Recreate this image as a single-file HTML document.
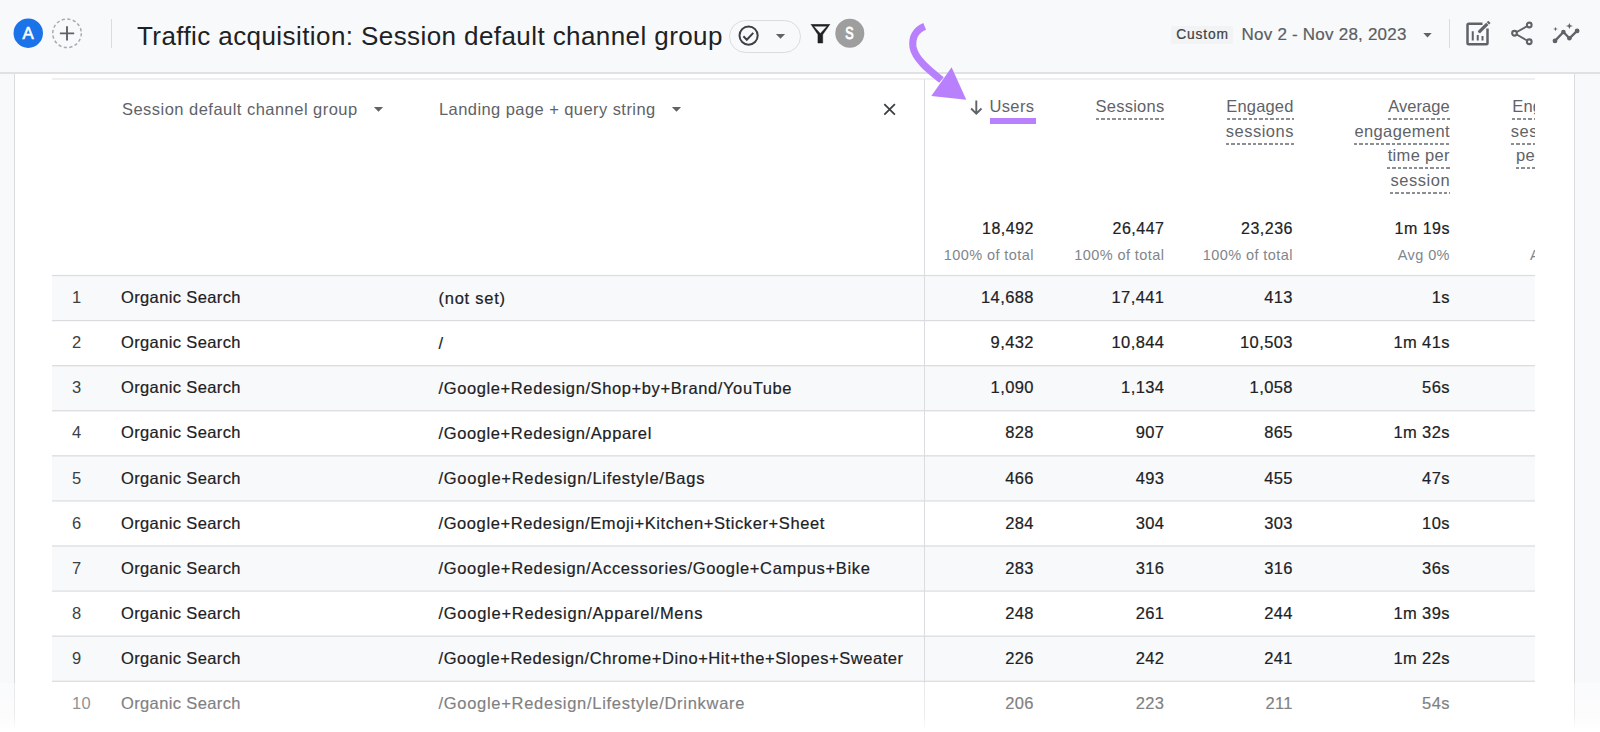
<!DOCTYPE html>
<html><head><meta charset="utf-8"><style>
html,body{margin:0;padding:0}
body{width:1600px;height:732px;overflow:hidden;position:relative;background:#f8f9fa;font-family:"Liberation Sans",sans-serif}
.t{position:absolute;white-space:nowrap}
.hdr{position:absolute;left:0;top:0;width:1600px;height:73px;background:#f8f9fa}
.card{position:absolute;left:14px;top:74px;width:1559px;height:700px;background:#fff;border-left:1px solid #dadce0;border-right:1px solid #dadce0}
</style></head><body>
<div class="hdr"></div>
<svg style="position:absolute;left:0;top:0" width="60" height="60"><circle cx="28.25" cy="33.2" r="14.7" fill="#1a73e8"/></svg>
<div class="t" style="left:13.3px;top:25.6px;width:29.6px;text-align:center;font-size:16.8px;line-height:16px;color:#fff;-webkit-text-stroke:0.6px #fff">A</div>
<svg style="position:absolute;left:51px;top:17px" width="32" height="32" viewBox="0 0 32 32"><circle cx="16" cy="16.3" r="14.3" fill="none" stroke="#a8acb0" stroke-width="1.5" stroke-dasharray="3.2 2.4"/><path d="M16 9.2v14.3M8.9 16.4h14.3" stroke="#5f6368" stroke-width="1.9"/></svg>
<div style="position:absolute;left:111px;top:19px;width:1px;height:29px;background:#dadce0"></div>
<div class="t" style="left:137px;top:22.79px;font-size:26px;line-height:26px;color:#202124;font-weight:400;letter-spacing:0.415px;">Traffic acquisition: Session default channel group</div>
<div style="position:absolute;left:729px;top:19.5px;width:71.5px;height:33px;border:1.2px solid #dadce0;border-radius:17px;box-sizing:border-box"></div>
<svg style="position:absolute;left:738px;top:25px" width="22" height="22" viewBox="0 0 22 22"><circle cx="10.6" cy="10.6" r="9.1" fill="none" stroke="#3c4043" stroke-width="2"/><path d="M5.4 11.3l3.4 3.4 6.5-6.8" fill="none" stroke="#3c4043" stroke-width="2"/></svg>
<svg style="position:absolute;left:775px;top:33px" width="11" height="7" viewBox="0 0 11 7"><path d="M0.9 0.9h9.2l-4.6 4.9z" fill="#5f6368"/></svg>
<svg style="position:absolute;left:810px;top:23.5px" width="22" height="21" viewBox="0 0 22 21"><path d="M0.9 0.2H20L12.75 10.6V19.1H7.9V10.6Z M3.7 2.2H17L10.3 9.5Z" fill="#202124" fill-rule="evenodd" stroke="#202124" stroke-width="0.4" stroke-linejoin="round"/></svg>
<svg style="position:absolute;left:800px;top:0" width="80" height="60"><circle cx="49.8" cy="33.3" r="14.5" fill="#9e9e9e"/></svg>
<div class="t" style="left:835px;top:26.1px;width:29px;text-align:center;font-size:16px;line-height:16px;color:#fff;-webkit-text-stroke:0.9px #fff;transform:scaleX(0.78)">S</div>
<div style="position:absolute;left:1171px;top:25.5px;width:61.5px;height:18px;background:#f1f3f4;border-radius:2px"></div>
<div class="t" style="left:1176.2px;top:28.32px;font-size:13.8px;line-height:13.8px;color:#3c4043;font-weight:400;letter-spacing:0.832px;-webkit-text-stroke:0.2px currentColor;">Custom</div>
<div class="t" style="left:1241.6px;top:25.71px;font-size:17px;line-height:17px;color:#5a5e63;font-weight:400;letter-spacing:0.22px;-webkit-text-stroke:0.2px currentColor;">Nov 2 - Nov 28, 2023</div>
<svg style="position:absolute;left:1421.6px;top:31.8px" width="11" height="7" viewBox="0 0 11 7"><path d="M1.3 1.1h8.4l-4.2 4.3z" fill="#5f6368"/></svg>
<div style="position:absolute;left:1449px;top:19px;width:1px;height:29px;background:#dadce0"></div>
<svg style="position:absolute;left:1460px;top:16px" width="34" height="34" viewBox="0 0 34 34"><path d="M22.5 7.75H8.75Q7.5 7.75 7.5 9V27Q7.5 28.25 8.75 28.25H26.25Q27.5 28.25 27.5 27V12.5" fill="none" stroke="#5f6368" stroke-width="2.5"/><path d="M12.75 15.25V24.5M17.75 19V24.5M22.5 20V24.5" stroke="#5f6368" stroke-width="2"/><path d="M18.9 16.3L20 15.2L27.3 7.9" stroke="#5f6368" stroke-width="3.2"/><path d="M18.4 17.2L20.2 15.4L19 14.2z" fill="#5f6368"/><path d="M27.9 7.3L29.4 5.8" stroke="#5f6368" stroke-width="3.2"/></svg>
<svg style="position:absolute;left:1508px;top:18px" width="28" height="30" viewBox="0 0 28 30"><path d="M6.5 15.25L21.25 7M6.5 15.25L21.25 23.75" stroke="#5f6368" stroke-width="1.9"/><circle cx="6.5" cy="15.25" r="2.35" fill="#f8f9fa" stroke="#5f6368" stroke-width="2.1"/><circle cx="21.25" cy="7" r="2.35" fill="#f8f9fa" stroke="#5f6368" stroke-width="2.1"/><circle cx="21.25" cy="23.75" r="2.35" fill="#f8f9fa" stroke="#5f6368" stroke-width="2.1"/></svg>
<svg style="position:absolute;left:1550px;top:20px" width="32" height="26" viewBox="0 0 32 26"><path d="M5 20.9l8.4-8.85 6 6.25 7.7-7.4" fill="none" stroke="#5f6368" stroke-width="2.3" stroke-linejoin="round"/><circle cx="5" cy="20.9" r="2.4" fill="#5f6368"/><circle cx="13.4" cy="12.05" r="2.3" fill="#5f6368"/><circle cx="19.4" cy="18.3" r="2.3" fill="#5f6368"/><circle cx="27.1" cy="10.9" r="2.4" fill="#5f6368"/><path d="M5.5 6.8l.6 1.6 1.9.6-1.9.6-.6 1.6-.6-1.6-1.9-.6 1.9-.6z" fill="#5f6368"/><path d="M19.4 2.9l1 2.3 2.6.8-2.6.8-1 2.3-1-2.3-2.6-.8 2.6-.8z" fill="#5f6368"/></svg>
<div class="card"></div>
<svg style="position:absolute;left:0;top:60px" width="1600" height="30"><rect x="0" y="12.3" width="1600" height="1.4" fill="#d6d8db"/><rect x="52" y="18.4" width="1483" height="1.2" fill="#e3e5e8"/></svg>
<div style="position:absolute;left:924px;top:79px;width:1px;height:660px;background:#dadce0"></div>
<div class="t" style="left:122px;top:101.03px;font-size:16.5px;line-height:16.5px;color:#5f6368;font-weight:400;letter-spacing:0.471px;">Session default channel group</div>
<svg style="position:absolute;left:373.1px;top:106px" width="11" height="7" viewBox="0 0 11 7"><path d="M0.9 0.9h9.2l-4.6 4.9z" fill="#5f6368"/></svg>
<div class="t" style="left:439px;top:101.03px;font-size:16.5px;line-height:16.5px;color:#5f6368;font-weight:400;letter-spacing:0.429px;">Landing page + query string</div>
<svg style="position:absolute;left:671px;top:106px" width="11" height="7" viewBox="0 0 11 7"><path d="M0.9 0.9h9.2l-4.6 4.9z" fill="#5f6368"/></svg>
<svg style="position:absolute;left:882px;top:102px" width="15" height="15" viewBox="0 0 15 15"><path d="M2.3 2.1l10.6 10.6M12.9 2.1L2.3 12.7" stroke="#3c4043" stroke-width="1.8"/></svg>
<svg style="position:absolute;left:968.5px;top:99px" width="15" height="17" viewBox="0 0 15 17"><path d="M7.3 1.4v13.2M2.1 9.5l5.2 5.2 5.2-5.2" fill="none" stroke="#5f6368" stroke-width="1.9"/></svg>
<div class="t" style="right:565.634px;top:98.03px;font-size:16.5px;line-height:16.5px;color:#5f6368;font-weight:400;letter-spacing:0.366px;">Users</div>
<div style="position:absolute;left:990px;top:118px;width:46px;height:6px;background:#b980fe"></div>
<div class="t" style="right:435.543px;top:98.03px;font-size:16.5px;line-height:16.5px;color:#5f6368;font-weight:400;letter-spacing:0.257px;">Sessions</div>
<div style="position:absolute;left:1095.5px;top:118.2px;width:69.5px;height:2px;background:repeating-linear-gradient(90deg,#8a8f94 0 3.4px,transparent 3.4px 5.4px)"></div>
<div class="t" style="right:306.415px;top:98.03px;font-size:16.5px;line-height:16.5px;color:#5f6368;font-weight:400;letter-spacing:0.185px;">Engaged</div>
<div class="t" style="right:306.106px;top:122.53px;font-size:16.5px;line-height:16.5px;color:#5f6368;font-weight:400;letter-spacing:0.494px;">sessions</div>
<div style="position:absolute;left:1226.8px;top:118.2px;width:66.79999999999995px;height:2px;background:repeating-linear-gradient(90deg,#8a8f94 0 3.4px,transparent 3.4px 5.4px)"></div>
<div style="position:absolute;left:1226px;top:142.7px;width:67.59999999999991px;height:2px;background:repeating-linear-gradient(90deg,#8a8f94 0 3.4px,transparent 3.4px 5.4px)"></div>
<div class="t" style="right:150.347px;top:98.03px;font-size:16.5px;line-height:16.5px;color:#5f6368;font-weight:400;letter-spacing:0.053px;">Average</div>
<div class="t" style="right:150.017px;top:122.53px;font-size:16.5px;line-height:16.5px;color:#5f6368;font-weight:400;letter-spacing:0.383px;">engagement</div>
<div class="t" style="right:150.073px;top:147.03px;font-size:16.5px;line-height:16.5px;color:#5f6368;font-weight:400;letter-spacing:0.327px;">time per</div>
<div class="t" style="right:149.861px;top:171.53px;font-size:16.5px;line-height:16.5px;color:#5f6368;font-weight:400;letter-spacing:0.539px;">session</div>
<div style="position:absolute;left:1387.5px;top:118.2px;width:62.299999999999955px;height:2px;background:repeating-linear-gradient(90deg,#8a8f94 0 3.4px,transparent 3.4px 5.4px)"></div>
<div style="position:absolute;left:1354px;top:142.7px;width:95.79999999999995px;height:2px;background:repeating-linear-gradient(90deg,#8a8f94 0 3.4px,transparent 3.4px 5.4px)"></div>
<div style="position:absolute;left:1387.2px;top:167.2px;width:62.59999999999991px;height:2px;background:repeating-linear-gradient(90deg,#8a8f94 0 3.4px,transparent 3.4px 5.4px)"></div>
<div style="position:absolute;left:1390.4px;top:191.7px;width:59.399999999999864px;height:2px;background:repeating-linear-gradient(90deg,#8a8f94 0 3.4px,transparent 3.4px 5.4px)"></div>
<div style="position:absolute;left:1460px;top:80px;width:75px;height:650px;overflow:hidden">
<div class="t" style="left:52.299999999999955px;top:18.03px;font-size:16.5px;line-height:16.5px;color:#5f6368;font-weight:400;letter-spacing:0.185px;">Engaged</div>
<div class="t" style="left:50.799999999999955px;top:42.53px;font-size:16.5px;line-height:16.5px;color:#5f6368;font-weight:400;letter-spacing:0.494px;">sessions</div>
<div class="t" style="left:56.0px;top:67.03px;font-size:16.5px;line-height:16.5px;color:#5f6368;font-weight:400;letter-spacing:0.4px;">per user</div>
<div style="position:absolute;left:52px;top:38.2px;width:80px;height:2px;background:repeating-linear-gradient(90deg,#8a8f94 0 3.4px,transparent 3.4px 5.4px)"></div>
<div style="position:absolute;left:50.6px;top:62.7px;width:80px;height:2px;background:repeating-linear-gradient(90deg,#8a8f94 0 3.4px,transparent 3.4px 5.4px)"></div>
<div style="position:absolute;left:56.2px;top:87.2px;width:80px;height:2px;background:repeating-linear-gradient(90deg,#8a8f94 0 3.4px,transparent 3.4px 5.4px)"></div>
<div class="t" style="left:70px;top:168.03px;font-size:14.5px;line-height:14.5px;color:#80868b;font-weight:400;letter-spacing:0.43px;">Avg 0%</div>
</div>
<div class="t" style="right:566.000px;top:220.56px;font-size:16px;line-height:16px;color:#202124;font-weight:400;letter-spacing:0.5px;-webkit-text-stroke:0.2px currentColor;">18,492</div>
<div class="t" style="right:566.068px;top:248.03px;font-size:14.5px;line-height:14.5px;color:#80868b;font-weight:400;letter-spacing:0.432px;">100% of total</div>
<div class="t" style="right:435.500px;top:220.56px;font-size:16px;line-height:16px;color:#202124;font-weight:400;letter-spacing:0.5px;-webkit-text-stroke:0.2px currentColor;">26,447</div>
<div class="t" style="right:435.568px;top:248.03px;font-size:14.5px;line-height:14.5px;color:#80868b;font-weight:400;letter-spacing:0.432px;">100% of total</div>
<div class="t" style="right:307.000px;top:220.56px;font-size:16px;line-height:16px;color:#202124;font-weight:400;letter-spacing:0.5px;-webkit-text-stroke:0.2px currentColor;">23,236</div>
<div class="t" style="right:307.068px;top:248.03px;font-size:14.5px;line-height:14.5px;color:#80868b;font-weight:400;letter-spacing:0.432px;">100% of total</div>
<div class="t" style="right:150.000px;top:220.56px;font-size:16px;line-height:16px;color:#202124;font-weight:400;letter-spacing:0.5px;-webkit-text-stroke:0.2px currentColor;">1m 19s</div>
<div class="t" style="right:150.100px;top:248.03px;font-size:14.5px;line-height:14.5px;color:#80868b;font-weight:400;letter-spacing:0.4px;">Avg 0%</div>
<svg style="position:absolute;left:0;top:0" width="1600" height="732"><rect x="52" y="275.00" width="1483" height="45.08" fill="#f8f9fa"/><rect x="52" y="365.16" width="1483" height="45.08" fill="#f8f9fa"/><rect x="52" y="455.32" width="1483" height="45.08" fill="#f8f9fa"/><rect x="52" y="545.48" width="1483" height="45.08" fill="#f8f9fa"/><rect x="52" y="635.64" width="1483" height="45.08" fill="#f8f9fa"/><rect x="52" y="274.90" width="1483" height="1.25" fill="#dadce0"/><rect x="52" y="319.98" width="1483" height="1.25" fill="#dadce0"/><rect x="52" y="365.06" width="1483" height="1.25" fill="#dadce0"/><rect x="52" y="410.14" width="1483" height="1.25" fill="#dadce0"/><rect x="52" y="455.22" width="1483" height="1.25" fill="#dadce0"/><rect x="52" y="500.30" width="1483" height="1.25" fill="#dadce0"/><rect x="52" y="545.38" width="1483" height="1.25" fill="#dadce0"/><rect x="52" y="590.46" width="1483" height="1.25" fill="#dadce0"/><rect x="52" y="635.54" width="1483" height="1.25" fill="#dadce0"/><rect x="52" y="680.62" width="1483" height="1.25" fill="#dadce0"/></svg>
<div style="position:absolute;left:924px;top:79px;width:1px;height:660px;background:#dadce0"></div>
<div class="t" style="left:72px;top:289.23px;font-size:16.5px;line-height:16.5px;color:#3c4043;font-weight:400;letter-spacing:0.3px;">1</div>
<div class="t" style="left:121px;top:289.23px;font-size:16.5px;line-height:16.5px;color:#202124;font-weight:400;letter-spacing:0.368px;-webkit-text-stroke:0.2px currentColor;">Organic Search</div>
<div class="t" style="left:438.5px;top:289.63px;font-size:16.5px;line-height:16.5px;color:#202124;font-weight:400;letter-spacing:0.747px;-webkit-text-stroke:0.2px currentColor;">(not set)</div>
<div class="t" style="right:566.100px;top:289.23px;font-size:16.5px;line-height:16.5px;color:#202124;font-weight:400;letter-spacing:0.4px;-webkit-text-stroke:0.2px currentColor;">14,688</div>
<div class="t" style="right:435.600px;top:289.23px;font-size:16.5px;line-height:16.5px;color:#202124;font-weight:400;letter-spacing:0.4px;-webkit-text-stroke:0.2px currentColor;">17,441</div>
<div class="t" style="right:307.100px;top:289.23px;font-size:16.5px;line-height:16.5px;color:#202124;font-weight:400;letter-spacing:0.4px;-webkit-text-stroke:0.2px currentColor;">413</div>
<div class="t" style="right:150.100px;top:289.23px;font-size:16.5px;line-height:16.5px;color:#202124;font-weight:400;letter-spacing:0.4px;-webkit-text-stroke:0.2px currentColor;">1s</div>
<div class="t" style="left:72px;top:334.31px;font-size:16.5px;line-height:16.5px;color:#3c4043;font-weight:400;letter-spacing:0.3px;">2</div>
<div class="t" style="left:121px;top:334.31px;font-size:16.5px;line-height:16.5px;color:#202124;font-weight:400;letter-spacing:0.368px;-webkit-text-stroke:0.2px currentColor;">Organic Search</div>
<div class="t" style="left:438.5px;top:334.71px;font-size:16.5px;line-height:16.5px;color:#202124;font-weight:400;letter-spacing:0.62px;-webkit-text-stroke:0.2px currentColor;">/</div>
<div class="t" style="right:566.100px;top:334.31px;font-size:16.5px;line-height:16.5px;color:#202124;font-weight:400;letter-spacing:0.4px;-webkit-text-stroke:0.2px currentColor;">9,432</div>
<div class="t" style="right:435.600px;top:334.31px;font-size:16.5px;line-height:16.5px;color:#202124;font-weight:400;letter-spacing:0.4px;-webkit-text-stroke:0.2px currentColor;">10,844</div>
<div class="t" style="right:307.100px;top:334.31px;font-size:16.5px;line-height:16.5px;color:#202124;font-weight:400;letter-spacing:0.4px;-webkit-text-stroke:0.2px currentColor;">10,503</div>
<div class="t" style="right:150.100px;top:334.31px;font-size:16.5px;line-height:16.5px;color:#202124;font-weight:400;letter-spacing:0.4px;-webkit-text-stroke:0.2px currentColor;">1m 41s</div>
<div class="t" style="left:72px;top:379.39px;font-size:16.5px;line-height:16.5px;color:#3c4043;font-weight:400;letter-spacing:0.3px;">3</div>
<div class="t" style="left:121px;top:379.39px;font-size:16.5px;line-height:16.5px;color:#202124;font-weight:400;letter-spacing:0.368px;-webkit-text-stroke:0.2px currentColor;">Organic Search</div>
<div class="t" style="left:438.5px;top:379.79px;font-size:16.5px;line-height:16.5px;color:#202124;font-weight:400;letter-spacing:0.611px;-webkit-text-stroke:0.2px currentColor;">/Google+Redesign/Shop+by+Brand/YouTube</div>
<div class="t" style="right:566.100px;top:379.39px;font-size:16.5px;line-height:16.5px;color:#202124;font-weight:400;letter-spacing:0.4px;-webkit-text-stroke:0.2px currentColor;">1,090</div>
<div class="t" style="right:435.600px;top:379.39px;font-size:16.5px;line-height:16.5px;color:#202124;font-weight:400;letter-spacing:0.4px;-webkit-text-stroke:0.2px currentColor;">1,134</div>
<div class="t" style="right:307.100px;top:379.39px;font-size:16.5px;line-height:16.5px;color:#202124;font-weight:400;letter-spacing:0.4px;-webkit-text-stroke:0.2px currentColor;">1,058</div>
<div class="t" style="right:150.100px;top:379.39px;font-size:16.5px;line-height:16.5px;color:#202124;font-weight:400;letter-spacing:0.4px;-webkit-text-stroke:0.2px currentColor;">56s</div>
<div class="t" style="left:72px;top:424.47px;font-size:16.5px;line-height:16.5px;color:#3c4043;font-weight:400;letter-spacing:0.3px;">4</div>
<div class="t" style="left:121px;top:424.47px;font-size:16.5px;line-height:16.5px;color:#202124;font-weight:400;letter-spacing:0.368px;-webkit-text-stroke:0.2px currentColor;">Organic Search</div>
<div class="t" style="left:438.5px;top:424.87px;font-size:16.5px;line-height:16.5px;color:#202124;font-weight:400;letter-spacing:0.618px;-webkit-text-stroke:0.2px currentColor;">/Google+Redesign/Apparel</div>
<div class="t" style="right:566.100px;top:424.47px;font-size:16.5px;line-height:16.5px;color:#202124;font-weight:400;letter-spacing:0.4px;-webkit-text-stroke:0.2px currentColor;">828</div>
<div class="t" style="right:435.600px;top:424.47px;font-size:16.5px;line-height:16.5px;color:#202124;font-weight:400;letter-spacing:0.4px;-webkit-text-stroke:0.2px currentColor;">907</div>
<div class="t" style="right:307.100px;top:424.47px;font-size:16.5px;line-height:16.5px;color:#202124;font-weight:400;letter-spacing:0.4px;-webkit-text-stroke:0.2px currentColor;">865</div>
<div class="t" style="right:150.100px;top:424.47px;font-size:16.5px;line-height:16.5px;color:#202124;font-weight:400;letter-spacing:0.4px;-webkit-text-stroke:0.2px currentColor;">1m 32s</div>
<div class="t" style="left:72px;top:469.55px;font-size:16.5px;line-height:16.5px;color:#3c4043;font-weight:400;letter-spacing:0.3px;">5</div>
<div class="t" style="left:121px;top:469.55px;font-size:16.5px;line-height:16.5px;color:#202124;font-weight:400;letter-spacing:0.368px;-webkit-text-stroke:0.2px currentColor;">Organic Search</div>
<div class="t" style="left:438.5px;top:469.95px;font-size:16.5px;line-height:16.5px;color:#202124;font-weight:400;letter-spacing:0.715px;-webkit-text-stroke:0.2px currentColor;">/Google+Redesign/Lifestyle/Bags</div>
<div class="t" style="right:566.100px;top:469.55px;font-size:16.5px;line-height:16.5px;color:#202124;font-weight:400;letter-spacing:0.4px;-webkit-text-stroke:0.2px currentColor;">466</div>
<div class="t" style="right:435.600px;top:469.55px;font-size:16.5px;line-height:16.5px;color:#202124;font-weight:400;letter-spacing:0.4px;-webkit-text-stroke:0.2px currentColor;">493</div>
<div class="t" style="right:307.100px;top:469.55px;font-size:16.5px;line-height:16.5px;color:#202124;font-weight:400;letter-spacing:0.4px;-webkit-text-stroke:0.2px currentColor;">455</div>
<div class="t" style="right:150.100px;top:469.55px;font-size:16.5px;line-height:16.5px;color:#202124;font-weight:400;letter-spacing:0.4px;-webkit-text-stroke:0.2px currentColor;">47s</div>
<div class="t" style="left:72px;top:514.63px;font-size:16.5px;line-height:16.5px;color:#3c4043;font-weight:400;letter-spacing:0.3px;">6</div>
<div class="t" style="left:121px;top:514.63px;font-size:16.5px;line-height:16.5px;color:#202124;font-weight:400;letter-spacing:0.368px;-webkit-text-stroke:0.2px currentColor;">Organic Search</div>
<div class="t" style="left:438.5px;top:515.03px;font-size:16.5px;line-height:16.5px;color:#202124;font-weight:400;letter-spacing:0.588px;-webkit-text-stroke:0.2px currentColor;">/Google+Redesign/Emoji+Kitchen+Sticker+Sheet</div>
<div class="t" style="right:566.100px;top:514.63px;font-size:16.5px;line-height:16.5px;color:#202124;font-weight:400;letter-spacing:0.4px;-webkit-text-stroke:0.2px currentColor;">284</div>
<div class="t" style="right:435.600px;top:514.63px;font-size:16.5px;line-height:16.5px;color:#202124;font-weight:400;letter-spacing:0.4px;-webkit-text-stroke:0.2px currentColor;">304</div>
<div class="t" style="right:307.100px;top:514.63px;font-size:16.5px;line-height:16.5px;color:#202124;font-weight:400;letter-spacing:0.4px;-webkit-text-stroke:0.2px currentColor;">303</div>
<div class="t" style="right:150.100px;top:514.63px;font-size:16.5px;line-height:16.5px;color:#202124;font-weight:400;letter-spacing:0.4px;-webkit-text-stroke:0.2px currentColor;">10s</div>
<div class="t" style="left:72px;top:559.71px;font-size:16.5px;line-height:16.5px;color:#3c4043;font-weight:400;letter-spacing:0.3px;">7</div>
<div class="t" style="left:121px;top:559.71px;font-size:16.5px;line-height:16.5px;color:#202124;font-weight:400;letter-spacing:0.368px;-webkit-text-stroke:0.2px currentColor;">Organic Search</div>
<div class="t" style="left:438.5px;top:560.11px;font-size:16.5px;line-height:16.5px;color:#202124;font-weight:400;letter-spacing:0.653px;-webkit-text-stroke:0.2px currentColor;">/Google+Redesign/Accessories/Google+Campus+Bike</div>
<div class="t" style="right:566.100px;top:559.71px;font-size:16.5px;line-height:16.5px;color:#202124;font-weight:400;letter-spacing:0.4px;-webkit-text-stroke:0.2px currentColor;">283</div>
<div class="t" style="right:435.600px;top:559.71px;font-size:16.5px;line-height:16.5px;color:#202124;font-weight:400;letter-spacing:0.4px;-webkit-text-stroke:0.2px currentColor;">316</div>
<div class="t" style="right:307.100px;top:559.71px;font-size:16.5px;line-height:16.5px;color:#202124;font-weight:400;letter-spacing:0.4px;-webkit-text-stroke:0.2px currentColor;">316</div>
<div class="t" style="right:150.100px;top:559.71px;font-size:16.5px;line-height:16.5px;color:#202124;font-weight:400;letter-spacing:0.4px;-webkit-text-stroke:0.2px currentColor;">36s</div>
<div class="t" style="left:72px;top:604.79px;font-size:16.5px;line-height:16.5px;color:#3c4043;font-weight:400;letter-spacing:0.3px;">8</div>
<div class="t" style="left:121px;top:604.79px;font-size:16.5px;line-height:16.5px;color:#202124;font-weight:400;letter-spacing:0.368px;-webkit-text-stroke:0.2px currentColor;">Organic Search</div>
<div class="t" style="left:438.5px;top:605.19px;font-size:16.5px;line-height:16.5px;color:#202124;font-weight:400;letter-spacing:0.728px;-webkit-text-stroke:0.2px currentColor;">/Google+Redesign/Apparel/Mens</div>
<div class="t" style="right:566.100px;top:604.79px;font-size:16.5px;line-height:16.5px;color:#202124;font-weight:400;letter-spacing:0.4px;-webkit-text-stroke:0.2px currentColor;">248</div>
<div class="t" style="right:435.600px;top:604.79px;font-size:16.5px;line-height:16.5px;color:#202124;font-weight:400;letter-spacing:0.4px;-webkit-text-stroke:0.2px currentColor;">261</div>
<div class="t" style="right:307.100px;top:604.79px;font-size:16.5px;line-height:16.5px;color:#202124;font-weight:400;letter-spacing:0.4px;-webkit-text-stroke:0.2px currentColor;">244</div>
<div class="t" style="right:150.100px;top:604.79px;font-size:16.5px;line-height:16.5px;color:#202124;font-weight:400;letter-spacing:0.4px;-webkit-text-stroke:0.2px currentColor;">1m 39s</div>
<div class="t" style="left:72px;top:649.87px;font-size:16.5px;line-height:16.5px;color:#3c4043;font-weight:400;letter-spacing:0.3px;">9</div>
<div class="t" style="left:121px;top:649.87px;font-size:16.5px;line-height:16.5px;color:#202124;font-weight:400;letter-spacing:0.368px;-webkit-text-stroke:0.2px currentColor;">Organic Search</div>
<div class="t" style="left:438.5px;top:650.27px;font-size:16.5px;line-height:16.5px;color:#202124;font-weight:400;letter-spacing:0.559px;-webkit-text-stroke:0.2px currentColor;">/Google+Redesign/Chrome+Dino+Hit+the+Slopes+Sweater</div>
<div class="t" style="right:566.100px;top:649.87px;font-size:16.5px;line-height:16.5px;color:#202124;font-weight:400;letter-spacing:0.4px;-webkit-text-stroke:0.2px currentColor;">226</div>
<div class="t" style="right:435.600px;top:649.87px;font-size:16.5px;line-height:16.5px;color:#202124;font-weight:400;letter-spacing:0.4px;-webkit-text-stroke:0.2px currentColor;">242</div>
<div class="t" style="right:307.100px;top:649.87px;font-size:16.5px;line-height:16.5px;color:#202124;font-weight:400;letter-spacing:0.4px;-webkit-text-stroke:0.2px currentColor;">241</div>
<div class="t" style="right:150.100px;top:649.87px;font-size:16.5px;line-height:16.5px;color:#202124;font-weight:400;letter-spacing:0.4px;-webkit-text-stroke:0.2px currentColor;">1m 22s</div>
<div class="t" style="left:72px;top:694.95px;font-size:16.5px;line-height:16.5px;color:#3c4043;font-weight:400;letter-spacing:0.3px;">10</div>
<div class="t" style="left:121px;top:694.95px;font-size:16.5px;line-height:16.5px;color:#202124;font-weight:400;letter-spacing:0.368px;-webkit-text-stroke:0.2px currentColor;">Organic Search</div>
<div class="t" style="left:438.5px;top:695.35px;font-size:16.5px;line-height:16.5px;color:#202124;font-weight:400;letter-spacing:0.709px;-webkit-text-stroke:0.2px currentColor;">/Google+Redesign/Lifestyle/Drinkware</div>
<div class="t" style="right:566.100px;top:694.95px;font-size:16.5px;line-height:16.5px;color:#202124;font-weight:400;letter-spacing:0.4px;-webkit-text-stroke:0.2px currentColor;">206</div>
<div class="t" style="right:435.600px;top:694.95px;font-size:16.5px;line-height:16.5px;color:#202124;font-weight:400;letter-spacing:0.4px;-webkit-text-stroke:0.2px currentColor;">223</div>
<div class="t" style="right:307.100px;top:694.95px;font-size:16.5px;line-height:16.5px;color:#202124;font-weight:400;letter-spacing:0.4px;-webkit-text-stroke:0.2px currentColor;">211</div>
<div class="t" style="right:150.100px;top:694.95px;font-size:16.5px;line-height:16.5px;color:#202124;font-weight:400;letter-spacing:0.4px;-webkit-text-stroke:0.2px currentColor;">54s</div>
<svg style="position:absolute;left:900px;top:15px" width="80" height="90" viewBox="0 0 80 90"><path d="M24.7 11.3C16 14.8 11.6 22 13 32 C15 44 29 55 41.5 65" fill="none" stroke="#b980fe" stroke-width="7.2"/><path d="M51.6 52.2L31.3 81.1L66.3 84.8z" fill="#b980fe"/></svg>
<div style="position:absolute;left:0;top:683px;width:1600px;height:49px;background:linear-gradient(rgba(255,255,255,0.38),rgba(255,255,255,0.45) 65%,rgba(255,255,255,0.85) 88%,#fff 94%)"></div>
</body></html>
